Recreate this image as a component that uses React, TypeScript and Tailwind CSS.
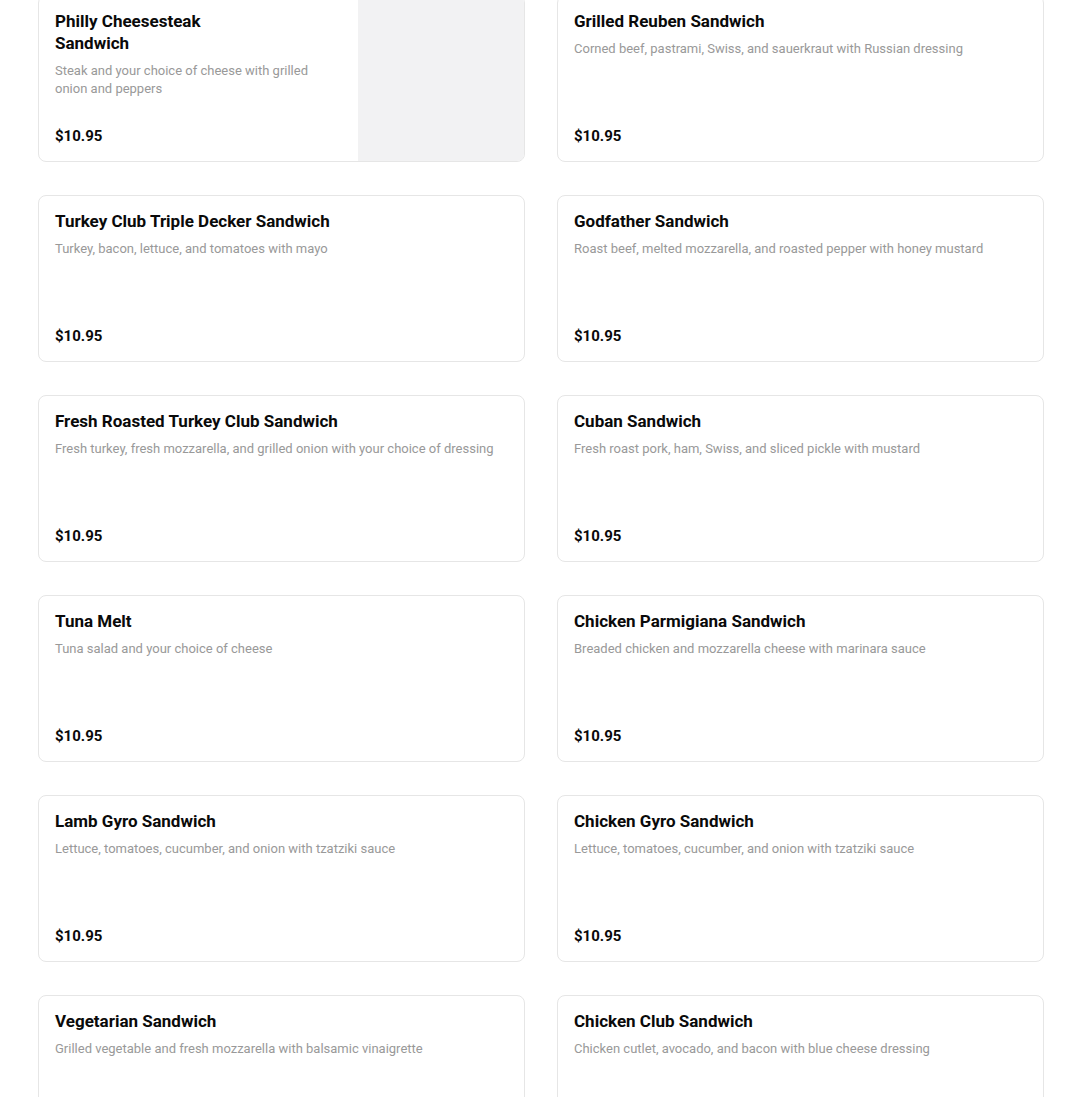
import React from "react";

type Item = { name: string; desc: string; price: string; image?: boolean };

const items: Item[] = [
  { name: "Philly Cheesesteak Sandwich", desc: "Steak and your choice of cheese with grilled onion and peppers", price: "$10.95", image: true },
  { name: "Grilled Reuben Sandwich", desc: "Corned beef, pastrami, Swiss, and sauerkraut with Russian dressing", price: "$10.95" },
  { name: "Turkey Club Triple Decker Sandwich", desc: "Turkey, bacon, lettuce, and tomatoes with mayo", price: "$10.95" },
  { name: "Godfather Sandwich", desc: "Roast beef, melted mozzarella, and roasted pepper with honey mustard", price: "$10.95" },
  { name: "Fresh Roasted Turkey Club Sandwich", desc: "Fresh turkey, fresh mozzarella, and grilled onion with your choice of dressing", price: "$10.95" },
  { name: "Cuban Sandwich", desc: "Fresh roast pork, ham, Swiss, and sliced pickle with mustard", price: "$10.95" },
  { name: "Tuna Melt", desc: "Tuna salad and your choice of cheese", price: "$10.95" },
  { name: "Chicken Parmigiana Sandwich", desc: "Breaded chicken and mozzarella cheese with marinara sauce", price: "$10.95" },
  { name: "Lamb Gyro Sandwich", desc: "Lettuce, tomatoes, cucumber, and onion with tzatziki sauce", price: "$10.95" },
  { name: "Chicken Gyro Sandwich", desc: "Lettuce, tomatoes, cucumber, and onion with tzatziki sauce", price: "$10.95" },
  { name: "Vegetarian Sandwich", desc: "Grilled vegetable and fresh mozzarella with balsamic vinaigrette", price: "$10.95" },
  { name: "Chicken Club Sandwich", desc: "Chicken cutlet, avocado, and bacon with blue cheese dressing", price: "$10.95" },
];

function Card({ item }: { item: Item }) {
  return (
    <div className="flex h-[167px] overflow-hidden rounded-lg border border-[#e6e6e6] bg-white">
      <div className={`flex min-w-0 flex-1 flex-col justify-between pl-4 pt-[14px] pb-4 ${item.image ? "pr-[34px]" : "pr-4"}`}>
        <div>
          <div className={`text-[17px] font-bold leading-[22px] text-[#0a0a0a] ${item.image ? "max-w-[200px]" : ""}`}>{item.name}</div>
          <div className="mt-[8px] text-[13px] leading-[18px] text-[#999]">{item.desc}</div>
        </div>
        <div className="text-[15px] font-bold leading-[18px] text-[#0a0a0a]">{item.price}</div>
      </div>
      {item.image && <div className="h-full w-[166px] shrink-0 bg-[#f2f2f3]" />}
    </div>
  );
}

export default function App() {
  return (
    <div className="min-h-screen bg-white" style={{ fontFamily: "Roboto, 'Liberation Sans', sans-serif" }}>
      <div className="ml-[38px] -mt-[5px] grid w-[1006px] grid-cols-2 gap-x-8 gap-y-[33px] pb-10">
        {items.map((it) => (
          <Card key={it.name} item={it} />
        ))}
      </div>
    </div>
  );
}
